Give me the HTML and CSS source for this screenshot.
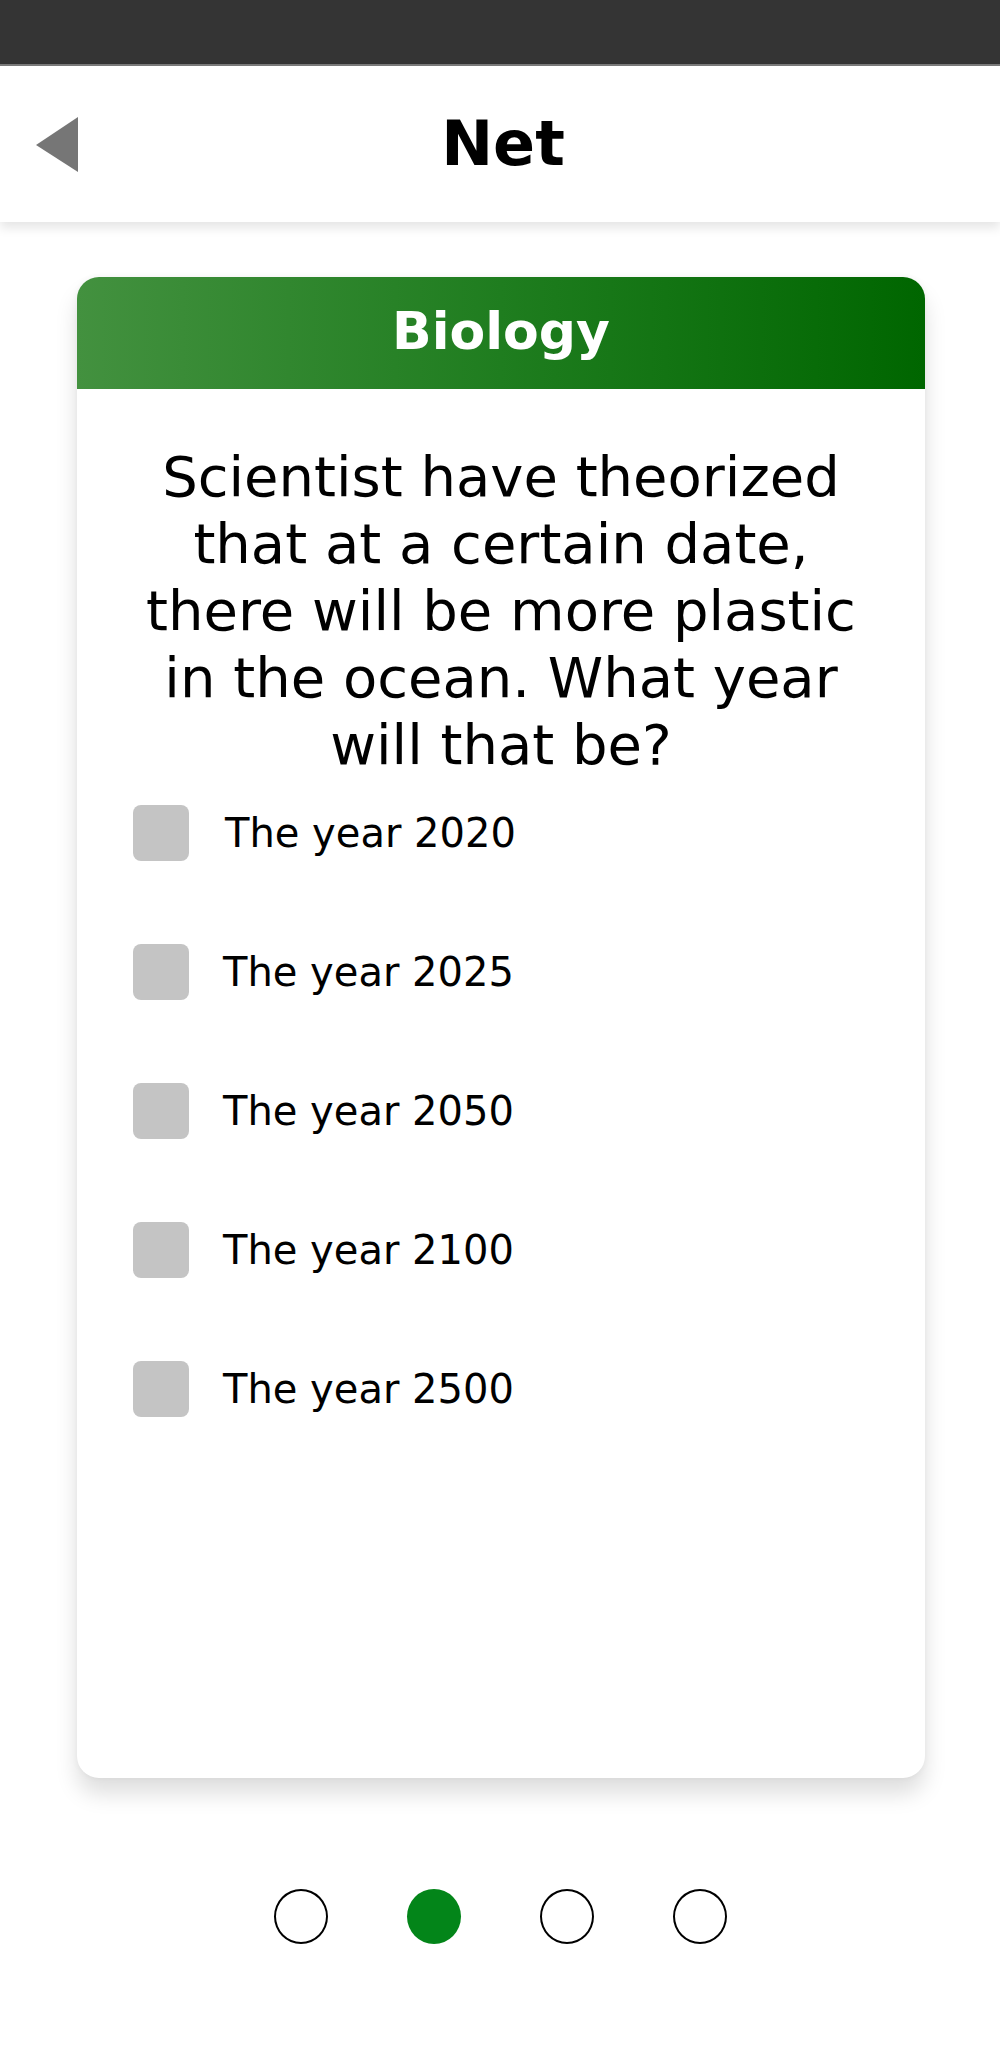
FILE: index.html
```html
<!DOCTYPE html>
<html lang="en">
<head>
<meta charset="utf-8">
<title>Net</title>
<link rel="stylesheet" href="styles.css">
</head>
<body>
<div class="statusbar"></div>
<header class="appbar">
  <div class="appbar-left">
    <svg class="back" width="42" height="55" viewBox="0 0 42 55"><polygon points="42,0 42,55 0,28" fill="#767676"/></svg>
  </div>
  <h1 class="title">Net</h1>
  <div class="appbar-right"></div>
</header>
<main class="main">
  <section class="card">
    <div class="card-head">Biology</div>
    <p class="question">Scientist have theorized<br>that at a certain date,<br>there will be more plastic<br>in the ocean. What year<br>will that be?</p>
    <ul class="options">
      <li class="option"><span class="box"></span><span class="label first">The year 2020</span></li>
      <li class="option"><span class="box"></span><span class="label">The year 2025</span></li>
      <li class="option"><span class="box"></span><span class="label">The year 2050</span></li>
      <li class="option"><span class="box"></span><span class="label">The year 2100</span></li>
      <li class="option"><span class="box"></span><span class="label">The year 2500</span></li>
    </ul>
  </section>
  <nav class="dots">
    <span class="dot"></span>
    <span class="dot active"></span>
    <span class="dot"></span>
    <span class="dot"></span>
  </nav>
</main>
</body>
</html>
```

FILE: styles.css
```css
* { box-sizing: border-box; }
html, body { margin: 0; padding: 0; background: #fff; }
body {
  width: 1000px;
  font-family: "DejaVu Sans", "Open Sans", sans-serif;
  color: #000;
}
.statusbar {
  height: 66px;
  background: #343434;
  border-bottom: 2px solid #7a7a7a;
}
.appbar {
  height: 156px;
  background: #fff;
  display: grid;
  grid-template-columns: 1fr auto 1fr;
  align-items: center;
  box-shadow: 0 6px 10px rgba(0,0,0,0.10);
  position: relative;
  z-index: 1;
}
.appbar-left { padding-left: 36px; display: flex; align-items: center; }
.back { display: block; }
.title {
  margin: 0;
  font-family: "DejaVu Sans", sans-serif;
  font-weight: bold;
  font-size: 62px;
  line-height: 1;
  padding-left: 6px;
}
.main { padding-top: 55px; }
.card {
  margin-left: 77px;
  width: 848px;
  height: 1501px;
  background: #fff;
  border-radius: 22px;
  overflow: hidden;
  box-shadow: 0 16px 22px rgba(0,0,0,0.13), 0 0 6px rgba(0,0,0,0.05);
}
.card-head {
  height: 112px;
  background: linear-gradient(90deg, #43913f 0%, #1f7d1f 50%, #006600 100%);
  color: #fff;
  font-weight: bold;
  font-size: 52px;
  display: flex;
  align-items: center;
  justify-content: center;
  padding-bottom: 4px;
}
.question {
  margin: 0;
  padding: 54px 10px 0;
  font-size: 56px;
  line-height: 67px;
  text-align: center;
}
.options {
  list-style: none;
  margin: 27px 0 0;
  padding: 0 0 0 56px;
  display: flex;
  flex-direction: column;
  gap: 83px;
}
.option {
  display: flex;
  align-items: center;
  height: 56px;
}
.box {
  width: 56px;
  height: 56px;
  border-radius: 8px;
  background: #c4c4c4;
  flex: none;
}
.label {
  margin-left: 34px;
  font-size: 40px;
  line-height: 1;
}
.label.first { margin-left: 36px; }
.dots {
  margin-top: 111px;
  display: flex;
  justify-content: center;
  gap: 79px;
}
.dot {
  width: 54px;
  height: 55px;
  border-radius: 50%;
  border: 2.5px solid #000;
  background: #fff;
}
.dot.active {
  border: none;
  background: #038519;
}
```
